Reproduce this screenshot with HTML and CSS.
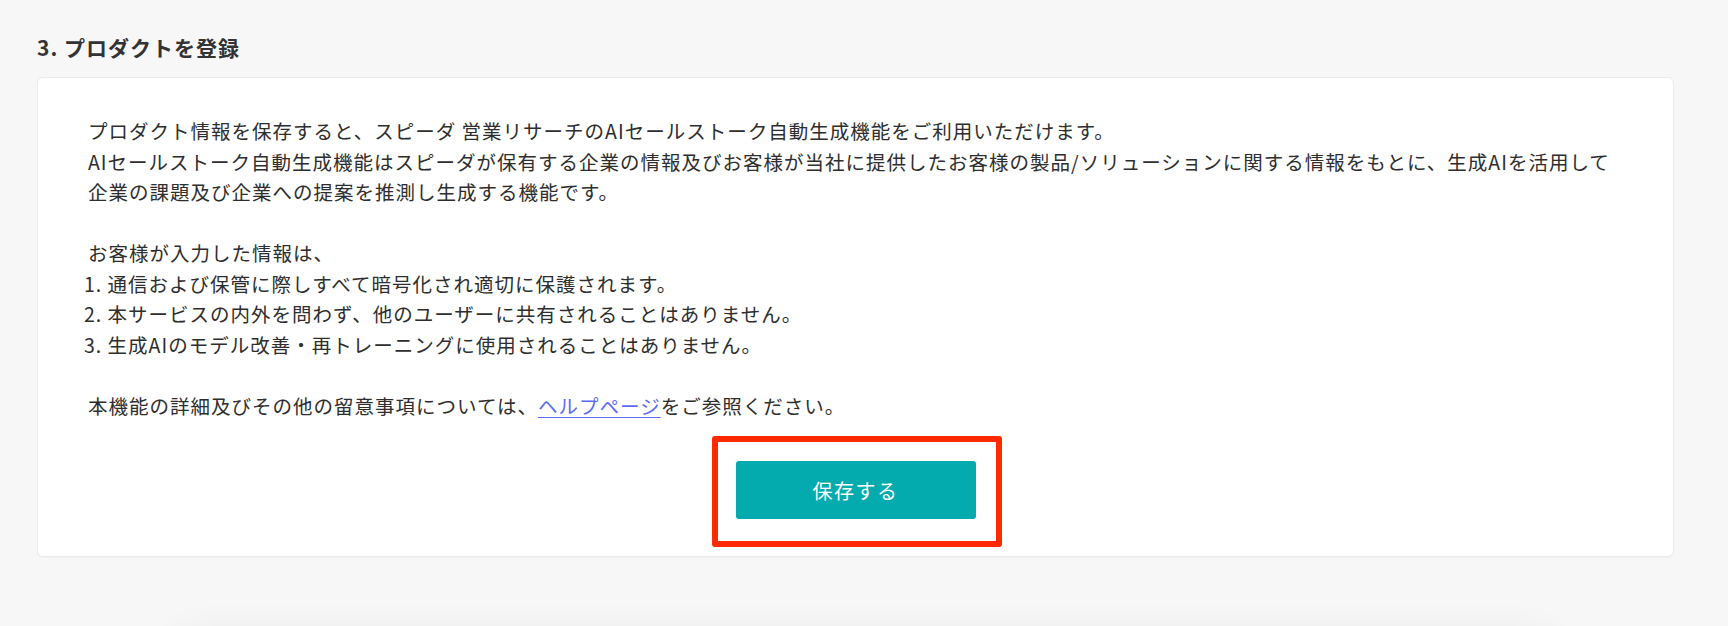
FILE: index.html
```html
<!DOCTYPE html>
<html lang="ja">
<head>
  <meta charset="UTF-8" />
  <title>プロダクトを登録</title>
  <meta name="viewport" content="width=device-width, initial-scale=1.0">
  <link rel="stylesheet" href="styles.css">
</head>
<body>

  <section class="step">
    <h2 class="step-title">3. プロダクトを登録</h2>

    <div class="card">
      <div class="notice">
        <p>プロダクト情報を保存すると、スピーダ 営業リサーチのAIセールストーク自動生成機能をご利用いただけます。<br>
        AIセールストーク自動生成機能はスピーダが保有する企業の情報及びお客様が当社に提供したお客様の製品/ソリューションに関する情報をもとに、生成AIを活用して<br>
        企業の課題及び企業への提案を推測し生成する機能です。</p>

        <p>お客様が入力した情報は、
          <span class="item">1. 通信および保管に際しすべて暗号化され適切に保護されます。</span>
          <span class="item">2. 本サービスの内外を問わず、他のユーザーに共有されることはありません。</span>
          <span class="item">3. 生成AIのモデル改善・再トレーニングに使用されることはありません。</span>
        </p>

        <p>本機能の詳細及びその他の留意事項については、<a href="#" class="help-link">ヘルプページ</a>をご参照ください。</p>
      </div>

      <div class="actions">
        <div class="highlight">
          <button class="save-btn">保存する</button>
        </div>
      </div>
    </div>
  </section>

  <div class="dock"></div>

</body>
</html>
```

FILE: styles.css
```css
* {
  box-sizing: border-box;
}
html, body {
  height: 100%;
}
body {
  margin: 0;
  background: #f7f7f7;
  color: #333;
  font-family: "Noto Sans CJK JP", "Noto Sans", sans-serif;
  overflow: hidden;
}
.step {
  padding: 32px 54px 0 37px;
}
.step-title {
  font-size: 21px;
  font-weight: 700;
  letter-spacing: 1px;
  line-height: 30px;
  margin: 0 0 15px;
  color: #333;
}
.card {
  background: #fff;
  border: 1px solid #ebebeb;
  border-radius: 6px;
  box-shadow: 0 1px 1px rgba(0, 0, 0, 0.03);
  padding: 38px 48px 9px 50px;
}
.notice {
  color: #2e2e2e;
}
.notice p {
  margin: 0 0 30.5px;
  font-size: 19.5px;
  letter-spacing: 1px;
  line-height: 30.5px;
}
.notice p:last-child {
  margin-bottom: 0;
}
.item {
  display: block;
  margin-left: -4px;
}
.help-link {
  color: #5c6cf2;
  text-decoration: underline;
  text-underline-offset: 3px;
}
.actions {
  display: flex;
  justify-content: center;
  margin-top: 15px;
}
.highlight {
  border: 6px solid #ff2a00;
  border-radius: 3px;
  padding: 19px 20px 22px 18px;
}
.save-btn {
  display: block;
  width: 240px;
  height: 58px;
  background: #03abae;
  color: #fff;
  border: none;
  border-radius: 3px;
  font-family: inherit;
  font-size: 20px;
  letter-spacing: 1.5px;
  cursor: pointer;
}
.dock {
  margin: 70px auto 0;
  width: 1400px;
  height: 80px;
  border-radius: 40px;
  background: #f7f7f7;
  box-shadow: 0 -4px 30px rgba(0, 0, 0, 0.035);
}
```
